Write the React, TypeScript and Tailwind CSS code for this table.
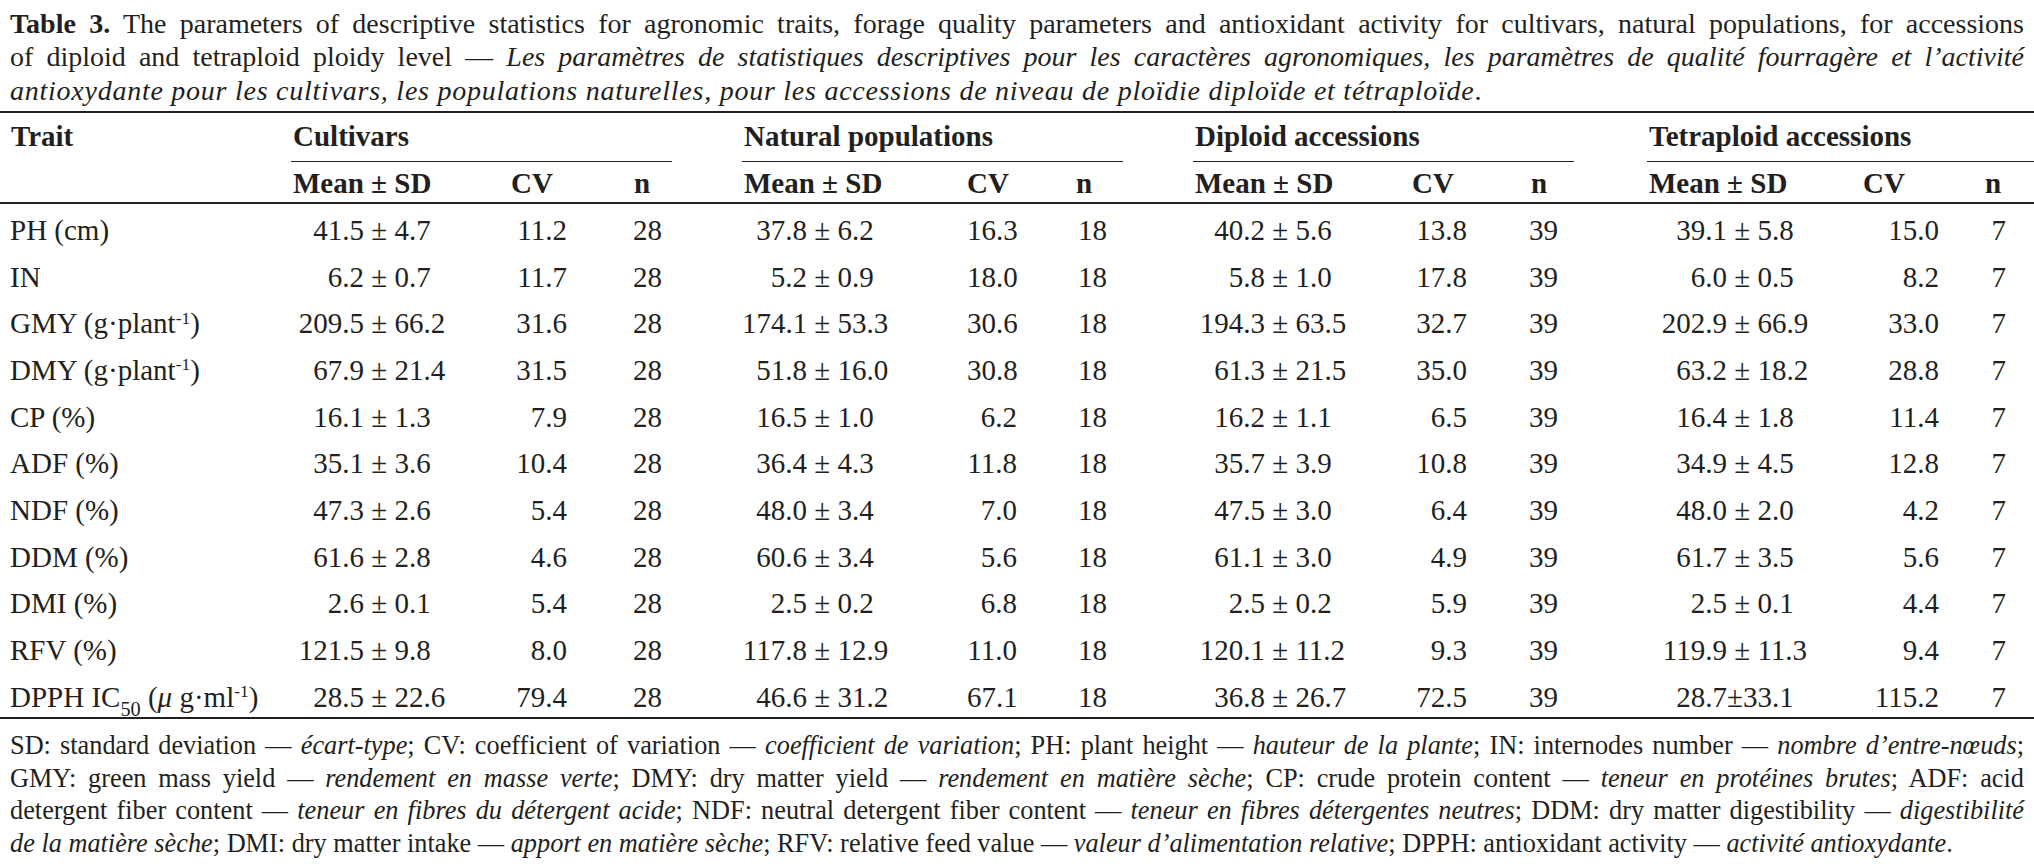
import React from "react";

// column layout: trait | per group: mean-left, mean-right, cv, n, spacer
const GRID =
  "grid grid-cols-[291px_73px_147px_56px_95px_80px_65px_160px_50px_90px_86px_72px_147px_55px_91px_89px_80px_136px_76px_67px_28px]";

const groups = [
  { name: "Cultivars", rule: "w-[381px]", npl: "pl-[67px]" },
  { name: "Natural populations", rule: "w-[381px]", npl: "pl-[59px]" },
  { name: "Diploid accessions", rule: "w-[381px]", npl: "pl-[64px]" },
  { name: "Tetraploid accessions", rule: "w-[387px]", npl: "pl-[46px]" },
];

type Stat = [string, string, string];

const Sup = ({ children }: { children: React.ReactNode }) => (
  <sup className="text-[60%] -top-[0.55em]">{children}</sup>
);

const rows: { trait: React.ReactNode; vals: Stat[] }[] = [
  {
    trait: "PH (cm)",
    vals: [
      ["41.5 ± 4.7", "11.2", "28"],
      ["37.8 ± 6.2", "16.3", "18"],
      ["40.2 ± 5.6", "13.8", "39"],
      ["39.1 ± 5.8", "15.0", "7"],
    ],
  },
  {
    trait: "IN",
    vals: [
      ["6.2 ± 0.7", "11.7", "28"],
      ["5.2 ± 0.9", "18.0", "18"],
      ["5.8 ± 1.0", "17.8", "39"],
      ["6.0 ± 0.5", "8.2", "7"],
    ],
  },
  {
    trait: (
      <>
        GMY (g·plant<Sup>-1</Sup>)
      </>
    ),
    vals: [
      ["209.5 ± 66.2", "31.6", "28"],
      ["174.1 ± 53.3", "30.6", "18"],
      ["194.3 ± 63.5", "32.7", "39"],
      ["202.9 ± 66.9", "33.0", "7"],
    ],
  },
  {
    trait: (
      <>
        DMY (g·plant<Sup>-1</Sup>)
      </>
    ),
    vals: [
      ["67.9 ± 21.4", "31.5", "28"],
      ["51.8 ± 16.0", "30.8", "18"],
      ["61.3 ± 21.5", "35.0", "39"],
      ["63.2 ± 18.2", "28.8", "7"],
    ],
  },
  {
    trait: "CP (%)",
    vals: [
      ["16.1 ± 1.3", "7.9", "28"],
      ["16.5 ± 1.0", "6.2", "18"],
      ["16.2 ± 1.1", "6.5", "39"],
      ["16.4 ± 1.8", "11.4", "7"],
    ],
  },
  {
    trait: "ADF (%)",
    vals: [
      ["35.1 ± 3.6", "10.4", "28"],
      ["36.4 ± 4.3", "11.8", "18"],
      ["35.7 ± 3.9", "10.8", "39"],
      ["34.9 ± 4.5", "12.8", "7"],
    ],
  },
  {
    trait: "NDF (%)",
    vals: [
      ["47.3 ± 2.6", "5.4", "28"],
      ["48.0 ± 3.4", "7.0", "18"],
      ["47.5 ± 3.0", "6.4", "39"],
      ["48.0 ± 2.0", "4.2", "7"],
    ],
  },
  {
    trait: "DDM (%)",
    vals: [
      ["61.6 ± 2.8", "4.6", "28"],
      ["60.6 ± 3.4", "5.6", "18"],
      ["61.1 ± 3.0", "4.9", "39"],
      ["61.7 ± 3.5", "5.6", "7"],
    ],
  },
  {
    trait: "DMI (%)",
    vals: [
      ["2.6 ± 0.1", "5.4", "28"],
      ["2.5 ± 0.2", "6.8", "18"],
      ["2.5 ± 0.2", "5.9", "39"],
      ["2.5 ± 0.1", "4.4", "7"],
    ],
  },
  {
    trait: "RFV (%)",
    vals: [
      ["121.5 ± 9.8", "8.0", "28"],
      ["117.8 ± 12.9", "11.0", "18"],
      ["120.1 ± 11.2", "9.3", "39"],
      ["119.9 ± 11.3", "9.4", "7"],
    ],
  },
  {
    trait: (
      <>
        DPPH IC<sub className="text-[70%] -bottom-[0.45em]">50</sub> (<i>μ</i> g·ml
        <Sup>-1</Sup>)
      </>
    ),
    vals: [
      ["28.5 ± 22.6", "79.4", "28"],
      ["46.6 ± 31.2", "67.1", "18"],
      ["36.8 ± 26.7", "72.5", "39"],
      ["28.7±33.1", "115.2", "7"],
    ],
  },
];

function splitMean(m: string) {
  if (m.includes(" ± ")) {
    const [l, r] = m.split(" ± ");
    return [l, "\u00a0±\u00a0" + r];
  }
  const [l, r] = m.split("±");
  return [l, "±" + r];
}

const Rule = ({ className = "" }: { className?: string }) => (
  <div className={`h-[2px] w-full bg-[#231f20] ${className}`} />
);

export default function App() {
  return (
    <div className="w-[2034px] h-[864px] overflow-hidden bg-white text-[#231f20] font-['Liberation_Serif','Times_New_Roman',serif]">
      {/* caption */}
      <div className="px-[10px] pt-[7px] text-[28px] leading-[33.3px]">
        <div className="text-justify [text-align-last:justify]">
          <b>Table 3.</b> The parameters of descriptive statistics for agronomic traits, forage quality
          parameters and antioxidant activity for cultivars, natural populations, for accessions
        </div>
        <div className="text-justify [text-align-last:justify]">
          of diploid and tetraploid ploidy level —{" "}
          <i>
            Les paramètres de statistiques descriptives pour les caractères agronomiques, les paramètres
            de qualité fourragère et l’activité
          </i>
        </div>
        <div className="tracking-[0.75px]">
          <i>
            antioxydante pour les cultivars, les populations naturelles, pour les accessions de niveau de
            ploïdie diploïde et tétraploïde
          </i>
          .
        </div>
      </div>

      <Rule className="mt-[4px]" />

      {/* table head */}
      <div className="text-[29px] font-bold">
        <div className={`${GRID} h-[49.5px]`}>
          <div className="flex items-center pl-[11px] pb-[1.5px]">Trait</div>
          {groups.map((g) => (
            <div key={g.name} className="col-span-5 flex flex-col">
              <div className="flex flex-1 items-center pl-[2px]">{g.name}</div>
              <div className={`h-[1.5px] bg-[#231f20] ${g.rule}`} />
            </div>
          ))}
        </div>
        <div className={`${GRID} h-[39.5px] items-center`}>
          <div />
          {groups.map((g) => (
            <React.Fragment key={g.name}>
              <div className="col-span-2 pl-[2px] whitespace-nowrap">Mean ± SD</div>
              <div>CV</div>
              <div className={g.npl}>n</div>
              <div />
            </React.Fragment>
          ))}
        </div>
      </div>

      <Rule />

      {/* table body */}
      <div className="text-[29px]">
        {rows.map((r, i) => (
          <div key={i} className={`${GRID} h-[46.7px] items-center pt-[5px] whitespace-nowrap`}>
            <div className="pl-[10px]">{r.trait}</div>
            {r.vals.map((v, j) => {
              const [l, rt] = splitMean(v[0]);
              return (
                <React.Fragment key={j}>
                  <div className="text-right">{l}</div>
                  <div>{rt}</div>
                  <div className="text-right">{v[1]}</div>
                  <div className="text-right">{v[2]}</div>
                  <div />
                </React.Fragment>
              );
            })}
          </div>
        ))}
      </div>

      <Rule />

      {/* footnote */}
      <div className="px-[10px] pt-[11px] text-[26.3px] leading-[32.4px]">
        <div className="text-justify [text-align-last:justify]">
          SD: standard deviation — <i>écart-type</i>; CV: coefficient of variation —{" "}
          <i>coefficient de variation</i>; PH: plant height — <i>hauteur de la plante</i>; IN: internodes
          number — <i>nombre d’entre-nœuds</i>;
        </div>
        <div className="text-justify [text-align-last:justify]">
          GMY: green mass yield — <i>rendement en masse verte</i>; DMY: dry matter yield —{" "}
          <i>rendement en matière sèche</i>; CP: crude protein content — <i>teneur en protéines brutes</i>;
          ADF: acid
        </div>
        <div className="text-justify [text-align-last:justify]">
          detergent fiber content — <i>teneur en fibres du détergent acide</i>; NDF: neutral detergent fiber
          content — <i>teneur en fibres détergentes neutres</i>; DDM: dry matter digestibility —{" "}
          <i>digestibilité</i>
        </div>
        <div>
          <i>de la matière sèche</i>; DMI: dry matter intake — <i>apport en matière sèche</i>; RFV: relative
          feed value — <i>valeur d’alimentation relative</i>; DPPH: antioxidant activity —{" "}
          <i>activité antioxydante</i>.
        </div>
      </div>
    </div>
  );
}
